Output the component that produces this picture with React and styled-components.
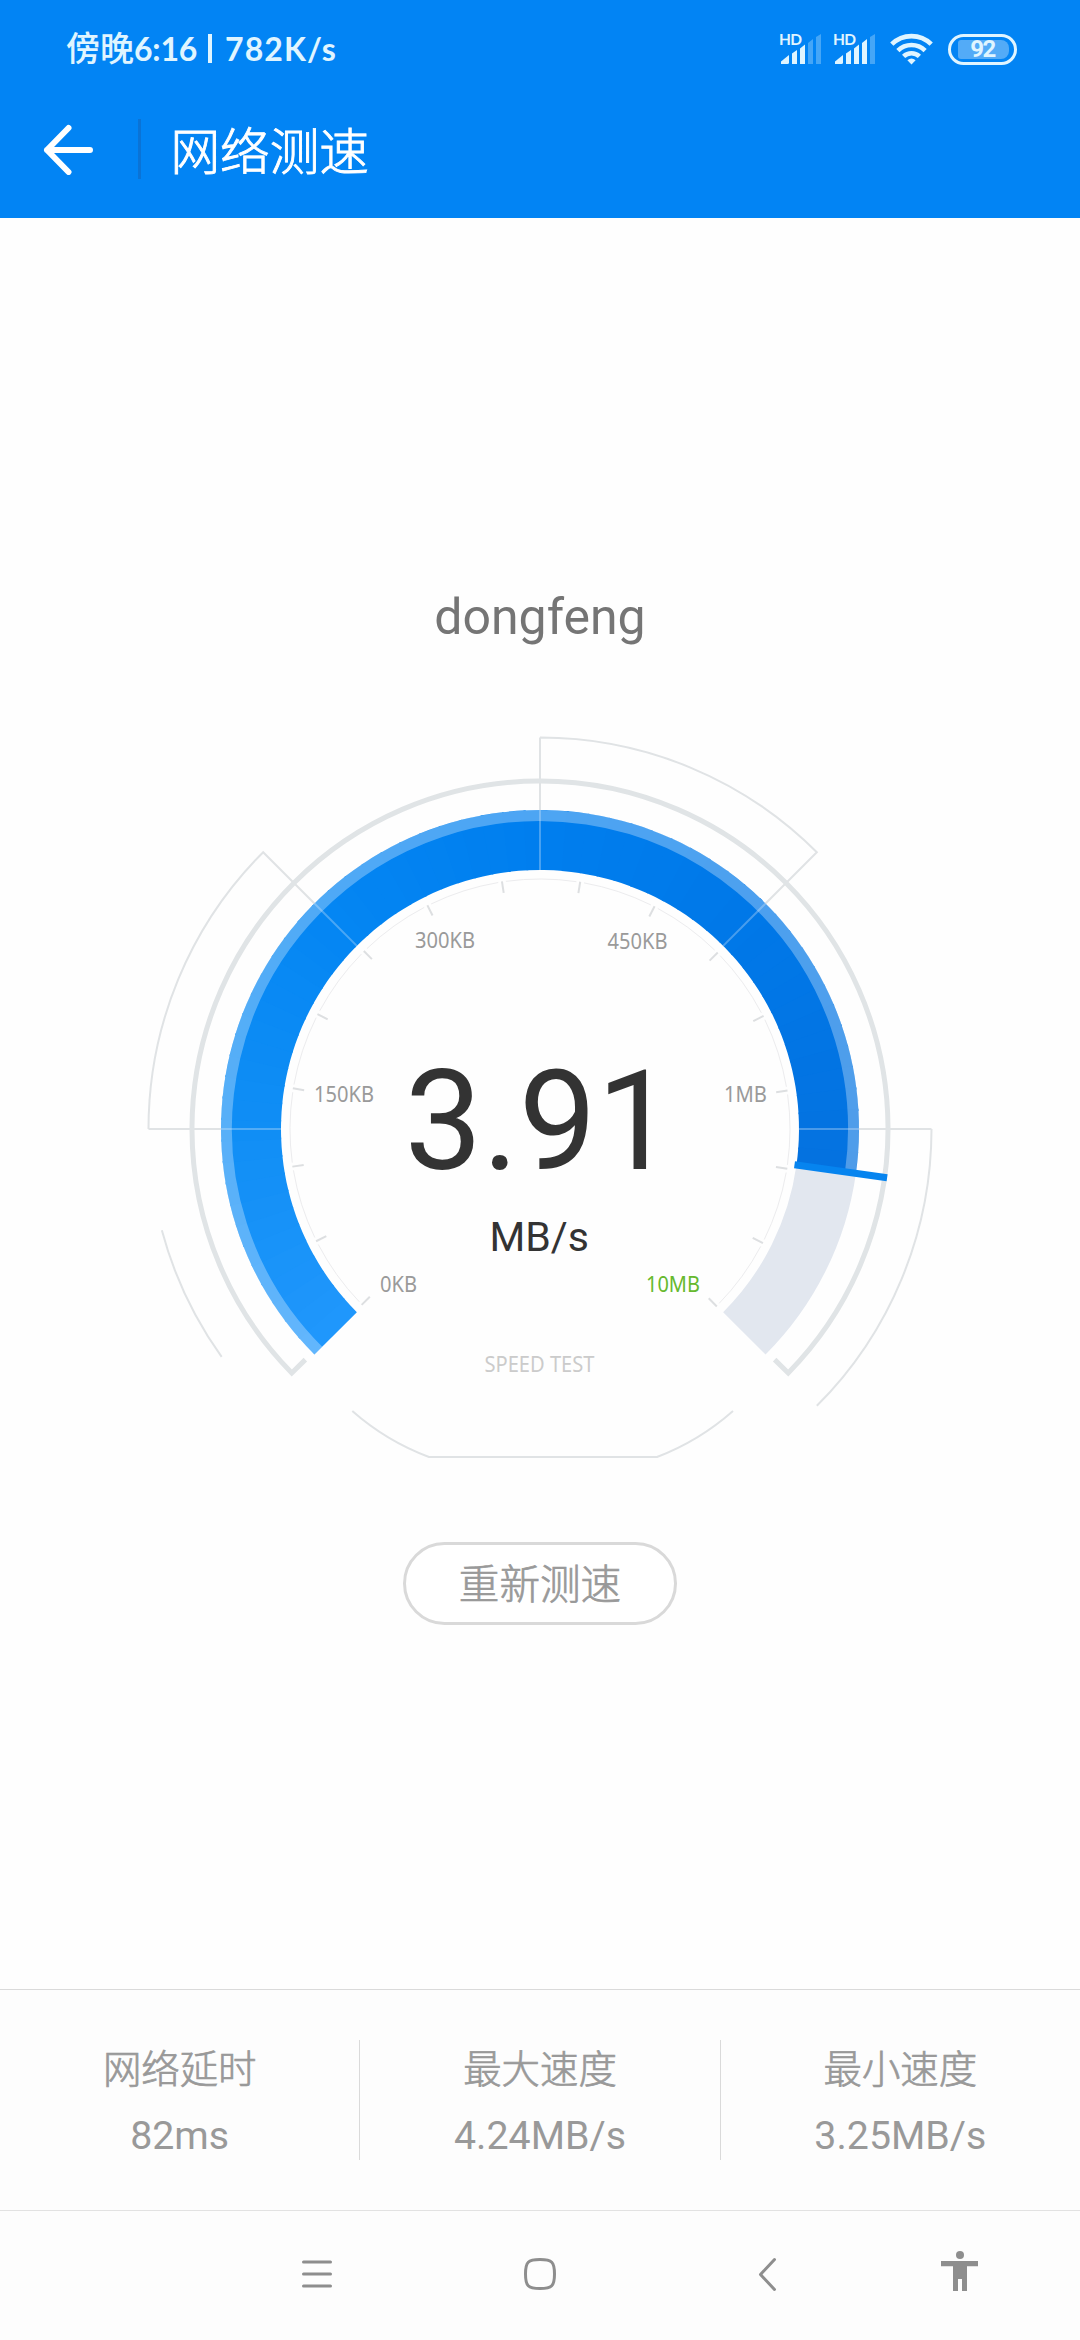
import React from "react";
import styled, { createGlobalStyle } from "styled-components";

const latin = `Roboto, "Noto Sans CJK SC", sans-serif`;
const cjk = `"Noto Sans CJK SC", sans-serif`;

const Global = createGlobalStyle`
  body { margin: 0; background: #fefefe; }
  * { box-sizing: border-box; }
`;

const Screen = styled.div`
  display: flex;
  flex-direction: column;
  width: 1080px;
  height: 2340px;
  overflow: hidden;
  font-family: ${latin};
  color: #999;
`;

const Header = styled.header`
  display: flex;
  flex-direction: column;
  height: 218px;
  background: #0284f4;
  color: #fff;
`;

const StatusBar = styled.div`
  display: flex;
  align-items: center;
  justify-content: space-between;
  height: 98px;
  padding: 0 63px 0 66px;
  color: #e0f5ff;
`;

const Clock = styled.div`
  display: flex;
  align-items: baseline;
  margin-top: -3px;
  font: 700 32px/40px Lato, ${cjk};
`;

const Period = styled.span`
  font: 500 34px/40px ${cjk};
`;

const Time = styled.span`
  width: 63px;
  letter-spacing: -0.2px;
`;

const ClockDivider = styled.span`
  align-self: center;
  width: 4px;
  height: 29px;
  margin: 2px 13px 0 11px;
  background: currentColor;
`;

const Rate = styled.span`
  letter-spacing: 1.1px;
`;

const StatusIcons = styled.div`
  display: flex;
  align-items: center;
  gap: 13px;
`;

const SignalWrap = styled.svg`
  width: 41px;
  height: 32px;
`;

const HdText = styled.text`
  font: 700 15.5px Lato, sans-serif;
  fill: currentColor;
`;

const WifiSvg = styled.svg`
  width: 43px;
  height: 32px;
  margin-left: 2px;
`;

const Battery = styled.div`
  display: flex;
  width: 69px;
  height: 31px;
  margin-left: 2px;
  padding: 3px 4px 3px 7px;
  border: 3px solid currentColor;
  border-radius: 16px;
`;

const BatteryLevel = styled.div`
  display: flex;
  align-items: center;
  justify-content: center;
  width: 51px;
  padding-right: 2px;
  border-radius: 3px 8px 8px 3px;
  background: rgba(255, 255, 255, 0.32);
  font: 700 24px/19px Roboto, sans-serif;
  letter-spacing: -1.6px;
`;

const TitleBar = styled.div`
  display: flex;
  align-items: center;
  height: 102px;
  padding-left: 42px;
`;

const BackArrow = styled.svg`
  width: 52px;
  height: 52px;
`;

const TitleDivider = styled.div`
  width: 3px;
  height: 60px;
  margin: 0 29.5px 0 44px;
  background: #0a73d6;
`;

const Title = styled.h1`
  margin: -3px 0 0;
  font: 300 49.6px/60px ${cjk};
  -webkit-text-stroke: 0.9px currentColor;
`;

const Main = styled.main`
  display: flex;
  flex: 1;
  flex-direction: column;
  align-items: center;
`;

const NetworkName = styled.div`
  margin-top: 369px;
  font-size: 50px;
  line-height: 60px;
  color: #757575;
`;

const Gauge = styled.svg`
  width: 800px;
  height: 740px;
  margin-top: 83px;
`;

const ScaleLabel = styled.text`
  font: 400 21px "Noto Sans", sans-serif;
  fill: ${(p) => p.$color || "#9a9a9a"};
`;

const Reading = styled.text`
  font: 400 138.5px Roboto, sans-serif;
  fill: #333;
`;

const Unit = styled.text`
  font: 400 41px Roboto, sans-serif;
  fill: #333;
`;

const RetestButton = styled.button`
  width: 274px;
  height: 83px;
  margin: 72px 0 0;
  padding: 0 0 3px;
  border: 3px solid #d9d9d9;
  border-radius: 42px;
  background: #fff;
  color: #999;
  font: 300 40.6px/60px ${cjk};
  -webkit-text-stroke: 0.7px currentColor;
`;

const Stats = styled.section`
  display: flex;
  align-items: center;
  height: 222px;
  border-top: 1px solid #dadada;
  border-bottom: 1px solid #e2e2e2;
  background: #fdfdfd;
`;

const Stat = styled.div`
  display: flex;
  flex: 1;
  flex-direction: column;
  align-items: center;
  height: 120px;
  border-right: 1px solid #dadada;
  color: #999;
  &:last-child {
    border-right: 0;
  }
`;

const StatLabel = styled.div`
  margin-top: -4px;
  font: 300 38.4px/60px ${cjk};
  -webkit-text-stroke: 0.7px currentColor;
`;

const StatValue = styled.div`
  margin-top: 10px;
  font-size: 39.3px;
  line-height: 60px;
`;

const NavBar = styled.nav`
  display: flex;
  align-items: center;
  height: 129px;
  padding: 0 0 3px 290px;
  background: #fdfdfd;
  color: #8e8e8e;
`;

const NavIcon = styled.svg`
  width: 54px;
  height: 54px;
  margin-right: ${(p) => p.$gap || 0}px;
`;

const CX = 540;
const CY = 1129;

/* Angles run clockwise in degrees from twelve o'clock. */
const at = (r, deg) => {
  const a = (deg * Math.PI) / 180;
  return [CX + r * Math.sin(a), CY - r * Math.cos(a)];
};
const pt = (r, deg) => at(r, deg).map((n) => n.toFixed(2)).join(" ");
const arc = (r, from, to) =>
  `M${pt(r, from)}A${r} ${r} 0 ${to - from > 180 ? 1 : 0} 1 ${pt(r, to)}`;

const STOPS = [
  [-135, [32, 151, 252]],
  [-90, [16, 142, 245]],
  [-45, [4, 134, 243]],
  [0, [0, 126, 238]],
  [45, [0, 120, 232]],
  [98, [4, 114, 224]],
];

const colorAt = (deg) => {
  const i = Math.max(1, STOPS.findIndex(([d]) => d >= deg));
  const [d0, c0] = STOPS[i - 1];
  const [d1, c1] = STOPS[i];
  const k = (deg - d0) / (d1 - d0);
  return `rgb(${c0.map((v, j) => Math.round(v + (c1[j] - v) * k)).join(",")})`;
};

const VALUE_ANGLE = 98;
const SLICES = Array.from({ length: 60 }, (_, i) => {
  const step = (VALUE_ANGLE + 135) / 60;
  const from = -135 + i * step;
  return {
    from,
    to: Math.min(VALUE_ANGLE, from + step + 0.4),
    color: colorAt(from + step / 2),
  };
});

const TICKS = Array.from({ length: 16 }, (_, i) => -134.6 + i * 17.98);

const LABELS = [
  ["0KB", 380, 1292, 37],
  ["150KB", 314, 1102, 60],
  ["300KB", 415, 948, 60],
  ["450KB", 607.5, 949, 60],
  ["1MB", 724, 1102, 43],
  ["10MB", 646, 1292, 54, "#66b92e"],
  ["SPEED TEST", 484.5, 1371.5, 110, "#cbcbcb"],
];

function SpeedGauge() {
  return (
    <Gauge viewBox="140 730 800 740" fill="none">
      <g stroke="#e0e3e5" strokeWidth="2">
        <path d={`${arc(391.5, -90, -45)}L${pt(319, -45)}M${pt(391.5, -90)}L${pt(319, -90)}`} />
        <path d={`${arc(391.5, 0, 45)}L${pt(319, 45)}M${pt(391.5, 0)}L${pt(319, 0)}`} />
        <path d={`${arc(391.5, 90, 135)}M${pt(391.5, 90)}L${pt(319, 90)}`} />
        <path d={arc(391.5, -125.6, -105)} />
        <path d="M352.3 1411Q386.3 1441 429 1457H657Q699 1441 733 1411" />
      </g>
      <path
        d={`M${pt(329, -134.5)}L${pt(348, -134.5)}${arc(348, -134.5, 134.5).replace(/^M[^A]*/, "")}L${pt(329, 134.5)}`}
        stroke="#e0e4e6"
        strokeWidth="5"
      />
      <path d={arc(289, VALUE_ANGLE, 135)} stroke="#e2e7ef" strokeWidth="60" />
      {SLICES.map((s) => (
        <path key={s.from} d={arc(289, s.from, s.to)} stroke={s.color} strokeWidth="60" />
      ))}
      <path d={arc(313.5, -135, VALUE_ANGLE)} stroke="#fff" strokeOpacity="0.3" strokeWidth="11" />
      {[-90, -45, 0, 45, 90].map((a) => (
        <path key={a} d={`M${pt(259, a)}L${pt(319, a)}`} stroke="#dcebfa" strokeOpacity="0.33" strokeWidth="2" />
      ))}
      {TICKS.slice(0, -1).map((a) => (
        <path key={a} d={arc(250, a + 0.9, a + 17.1)} stroke="#ececee" strokeWidth="1" />
      ))}
      {TICKS.map((a) => (
        <path key={a} d={`M${pt(239, a)}L${pt(250.5, a)}`} stroke="#dddfe1" strokeWidth="2" />
      ))}
      <path d={`M${pt(257, VALUE_ANGLE)}L${pt(350.5, VALUE_ANGLE)}`} stroke="#0684ef" strokeWidth="7" />
      {LABELS.map(([text, x, y, w, color]) => (
        <ScaleLabel key={text} x={x} y={y} textLength={w} lengthAdjust="spacingAndGlyphs" $color={color}>
          {text}
        </ScaleLabel>
      ))}
      <Reading x="404.5" y="1169">3.91</Reading>
      <Unit x="489.5" y="1251">MB/s</Unit>
    </Gauge>
  );
}

const BARS = [
  "M1 31V28.5L9 22V29.5Q9 31 7.5 31Z",
  "M12 31V20.5L17 17V31Z",
  "M20 31V15.5L25 11.5V31Z",
  "M28 31V10L33 6V31Z",
  "M36 31V4L41 1V31Z",
];

function Signal({ level }) {
  return (
    <SignalWrap viewBox="0 0 41 32" overflow="visible">
      <HdText x="-1" y="11.5" textLength="23">HD</HdText>
      {BARS.map((d, i) => (
        <path key={d} d={d} fill="currentColor" opacity={i < level ? 1 : 0.3} />
      ))}
    </SignalWrap>
  );
}

function Wifi() {
  return (
    <WifiSvg viewBox="0 0 43 32" fill="none" stroke="currentColor" strokeWidth="4.6">
      <path d="M1.8 11.2A28 28 0 0 1 41.2 11.2" />
      <path d="M7.9 17.6A19.5 19.5 0 0 1 35.1 17.6" />
      <path d="M13.6 23.4A11.5 11.5 0 0 1 29.4 23.4" />
      <path d="M17.4 27.2Q21.5 23.6 25.6 27.2L21.5 31.4Z" fill="currentColor" stroke="none" />
    </WifiSvg>
  );
}

const STATS = [
  ["网络延时", "82ms"],
  ["最大速度", "4.24MB/s"],
  ["最小速度", "3.25MB/s"],
];

export default function App() {
  return (
    <Screen>
      <Global />
      <Header>
        <StatusBar>
          <Clock>
            <Period>傍晚</Period>
            <Time>6:16</Time>
            <ClockDivider />
            <Rate>782K/s</Rate>
          </Clock>
          <StatusIcons>
            <Signal level={3} />
            <Signal level={4} />
            <Wifi />
            <Battery>
              <BatteryLevel>92</BatteryLevel>
            </Battery>
          </StatusIcons>
        </StatusBar>
        <TitleBar>
          <BackArrow viewBox="0 0 52 52" fill="none" stroke="#fff" strokeWidth="6" strokeLinecap="round" strokeLinejoin="round">
            <path d="M26.5 5L5 27L26.5 49M5 27H48" />
          </BackArrow>
          <TitleDivider />
          <Title>网络测速</Title>
        </TitleBar>
      </Header>
      <Main>
        <NetworkName>dongfeng</NetworkName>
        <SpeedGauge />
        <RetestButton>重新测速</RetestButton>
      </Main>
      <Stats>
        {STATS.map(([label, value]) => (
          <Stat key={label}>
            <StatLabel>{label}</StatLabel>
            <StatValue>{value}</StatValue>
          </Stat>
        ))}
      </Stats>
      <NavBar>
        <NavIcon $gap={169} viewBox="0 0 54 54" fill="none" stroke="currentColor" strokeWidth="3" strokeLinecap="round">
          <path d="M13.5 15H40.5M13.5 27H40.5M13.5 39H40.5" />
        </NavIcon>
        <NavIcon $gap={173} viewBox="0 0 54 54" fill="none" stroke="currentColor" strokeWidth="3">
          <path d="M27 12.5C39 12.5 41.5 15 41.5 27S39 41.5 27 41.5S12.5 39 12.5 27S15 12.5 27 12.5Z" />
        </NavIcon>
        <NavIcon $gap={139} viewBox="0 0 54 54" fill="none" stroke="currentColor" strokeWidth="3" strokeLinecap="round" strokeLinejoin="round">
          <path d="M34.5 12.5L20.5 27.5L34.5 42.5" />
        </NavIcon>
        <NavIcon viewBox="0 0 54 54" fill="currentColor">
          <circle cx="27" cy="8" r="4" />
          <path d="M8 14H45V19.2H34V44H29V32H25V44H20V19.2H8Z" />
        </NavIcon>
      </NavBar>
    </Screen>
  );
}
